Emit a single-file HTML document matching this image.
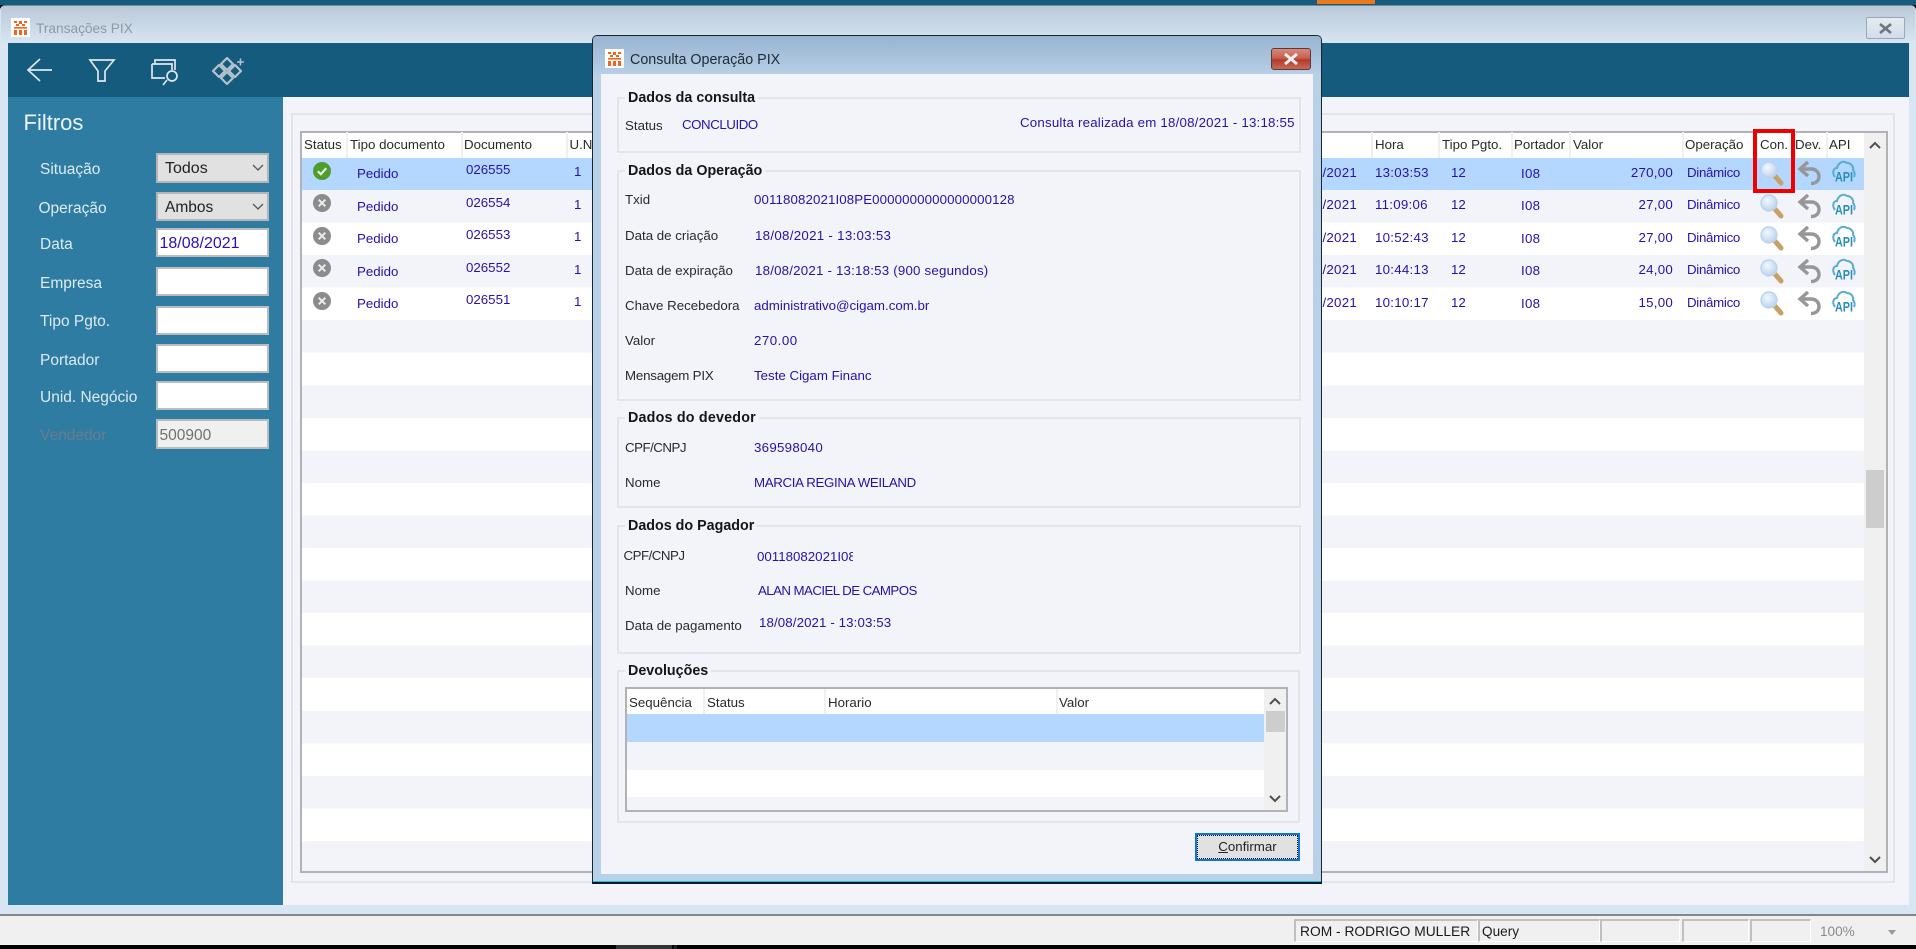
<!DOCTYPE html>
<html lang="pt">
<head>
<meta charset="utf-8">
<title>Transações PIX</title>
<style>
html,body{margin:0;padding:0;width:1916px;height:949px;overflow:hidden;background:#000}
body{position:relative;font-family:"Liberation Sans",sans-serif;font-size:13.3px;color:#222;filter:blur(.35px)}
.a{position:absolute;box-sizing:border-box}
.t{position:absolute;white-space:nowrap;line-height:16px;height:16px;font-size:13.3px}
.b{color:#2612a8}
.k{color:#2a2a2a}
.n{letter-spacing:.25px}
.u{letter-spacing:-.45px}
.d{letter-spacing:-.3px}
.s{font-size:15.5px;color:#dcebf3;line-height:20px;height:20px}
.in{position:absolute;box-sizing:border-box;left:156px;width:113px;background:#fff;border:2px solid #b9bcbf}
.sel{background:#e1e1e1;border:2px solid #b5b5b5}
.gb{position:absolute;box-sizing:border-box;border:2px solid #e3e5ea}
.lg{position:absolute;white-space:nowrap;font-weight:bold;font-size:14.3px;line-height:16px;color:#151515;background:#f2f4fa;padding:0 3px 0 3px}
.hd{position:absolute;width:2px;background:#f0f0f0}
.c{position:absolute;box-sizing:border-box;top:919px;height:23px;border-top:2px solid #c0c0c0;border-left:2px solid #c0c0c0;border-right:1px solid #fff;border-bottom:1px solid #fff}
svg{position:absolute;overflow:visible}
</style>
</head>
<body>
<svg width="0" height="0" style="left:0;top:0">
<defs>
<symbol id="logo" viewBox="0 0 19 19" overflow="visible">
<rect width="19" height="19" fill="#fff"/>
<g fill="#f0641e"><rect x="3" y="3" width="3" height="2"/><rect x="8" y="3" width="3" height="3"/><rect x="13" y="3" width="3" height="2"/><rect x="5" y="6" width="3" height="2"/><rect x="11" y="6" width="3" height="2"/><rect x="3" y="9" width="13" height="1.6"/><rect x="3" y="12" width="3" height="5"/><rect x="8" y="12" width="3" height="5"/><rect x="13" y="12" width="3" height="5"/></g>
</symbol>
<radialGradient id="lens" cx="40%" cy="35%" r="70%"><stop offset="0" stop-color="#f4f9ff"/><stop offset="1" stop-color="#b4d0ec"/></radialGradient>
<symbol id="mag" viewBox="0 0 24 26" overflow="visible">
<path d="M14 14 L21 22" stroke="#c99f66" stroke-width="5" stroke-linecap="round"/>
<circle cx="9" cy="9" r="8" fill="url(#lens)" stroke="#bcd4ea" stroke-width="1.4"/>
</symbol>
<symbol id="und" viewBox="0 0 24 26" overflow="visible">
<path d="M10 2 L2 9 L10 16 M2.5 9 H13 C18 9 21 12.5 21 16.5 C21 20.5 18 23.5 13 23.5" fill="none" stroke="#979797" stroke-width="3.4"/>
</symbol>
<symbol id="api" viewBox="0 0 24 24" overflow="visible">
<path d="M3 17 C0 13 1 8 5 8 C6 3 11 0 15 3 C19 3 22 7 21 10 C23 12 23 15 22 17" fill="none" stroke="#58acd0" stroke-width="2"/>
<text x="12" y="21.5" text-anchor="middle" font-family="Liberation Sans" font-weight="bold" font-size="14" fill="#2a8db8" textLength="18" lengthAdjust="spacingAndGlyphs">API</text>
</symbol>
<symbol id="xc" viewBox="0 0 18 18" overflow="visible">
<circle cx="9" cy="9" r="9" fill="#8c8c8c"/>
<path d="M5.7 5.7 L12.3 12.3 M12.3 5.7 L5.7 12.3" stroke="#ececec" stroke-width="2"/>
</symbol>
<symbol id="ok" viewBox="0 0 18 18" overflow="visible">
<circle cx="9" cy="9" r="9" fill="#4e9e2e"/>
<path d="M4.8 9.3 L7.9 12.2 L13.2 6.2" fill="none" stroke="#e8f5e0" stroke-width="2.2"/>
</symbol>
</defs>
</svg>

<!-- desktop strip -->
<div class="a" style="left:0;top:0;width:1916px;height:5px;background:#155b7d"></div>
<div class="a" style="left:1317px;top:0;width:58px;height:4px;background:#e87a1e"></div>

<!-- main window -->
<div class="a" style="left:0;top:5px;width:1916px;height:910px;background:#d8e5f2;border-top:1px solid #7c8a96;border-radius:5px 5px 0 0"></div>
<div class="a" style="left:1px;top:6px;width:1914px;height:37px;background:linear-gradient(#bac9d8,#d8e6f3);border-radius:4px 4px 0 0"></div>
<svg style="left:11px;top:18px" width="19" height="19"><use href="#logo" width="19" height="19"/></svg>
<div class="t" style="left:36px;top:21px;font-size:13.7px;color:#8d99a5">Transações PIX</div>
<div class="a" style="left:1866px;top:17px;width:39px;height:22px;background:linear-gradient(#e4ebf2,#d2ddE8);border:1px solid #9aa8b6;border-radius:2px"></div>
<svg style="left:1878px;top:23px" width="16" height="11"><path d="M2 1 L13 10 M13 1 L2 10" stroke="#6c7680" stroke-width="2.6" fill="none"/></svg>

<!-- toolbar -->
<div class="a" style="left:8px;top:43px;width:1901px;height:54px;background:#155b7d"></div>
<svg style="left:0;top:0" width="260" height="97" fill="none" stroke="#dfe7ec" stroke-width="1.7">
<path d="M52 70 H28 M40 59 L28 70 L40 81"/>
<path d="M90 60 H114 L105 71 V81 H98 V71 Z"/>
<path d="M155 64 V60 H175 V70 M152 64 H172 V70 M152 64 V78 H165"/>
<path d="M167 80 L163 85"/><circle cx="172" cy="76" r="5"/>
<g stroke="#b4c2cb" stroke-width="2.2" stroke-linejoin="round">
<path d="M227 58 L233 64 L227 70 L221 64 Z"/>
<path d="M219 65 L225 71 L219 77 L213 71 Z"/>
<path d="M235 65 L241 71 L235 77 L229 71 Z"/>
<path d="M227 72 L233 78 L227 84 L221 78 Z"/>
</g>
<path d="M237 62 H244 M240.5 58.5 V65.5" stroke="#b4c2cb" stroke-width="1.6"/>
</svg>

<!-- sidebar -->
<div class="a" style="left:8px;top:97px;width:275px;height:808px;background:#2f7ca3"></div>
<div class="t" style="left:23.5px;top:111px;font-size:22px;color:#eef5f9;line-height:24px;height:24px">Filtros</div>

<div class="t s" style="left:40px;top:159.5px">Situação</div>
<div class="in sel" style="top:153px;height:30px"></div>
<div class="t" style="left:165px;top:159px;font-size:16px;line-height:20px;height:20px;color:#222">Todos</div>
<svg style="left:252px;top:164px" width="12" height="8"><path d="M1 1 L6 6 L11 1" stroke="#555" stroke-width="1.3" fill="none"/></svg>

<div class="t s" style="left:38.5px;top:198.5px">Operação</div>
<div class="in sel" style="top:192px;height:29px"></div>
<div class="t" style="left:165px;top:198px;font-size:15.5px;line-height:20px;height:20px;color:#222">Ambos</div>
<svg style="left:252px;top:203px" width="12" height="8"><path d="M1 1 L6 6 L11 1" stroke="#555" stroke-width="1.3" fill="none"/></svg>

<div class="t s" style="left:40px;top:235px">Data</div>
<div class="in" style="top:228px;height:29px"></div>
<div class="t" style="left:159.5px;top:233.5px;font-size:16px;line-height:20px;height:20px;color:#2a10b8">18/08/2021</div>

<div class="t s" style="left:40px;top:274px">Empresa</div>
<div class="in" style="top:267px;height:29px"></div>

<div class="t s" style="left:40px;top:312px">Tipo Pgto.</div>
<div class="in" style="top:306px;height:29px"></div>

<div class="t s" style="left:40px;top:351px">Portador</div>
<div class="in" style="top:344px;height:29px"></div>

<div class="t s" style="left:40px;top:387.5px">Unid. Negócio</div>
<div class="in" style="top:381px;height:29px"></div>

<div class="t s" style="left:40px;top:426px;color:#677d8b">Vendedor</div>
<div class="in" style="top:419px;height:30px;background:#f0f0f0"></div>
<div class="t" style="left:159.5px;top:425.5px;font-size:15.5px;line-height:20px;height:20px;color:#707070">500900</div>

<!-- main panel -->
<div class="a" style="left:283px;top:97px;width:1626px;height:808px;background:#f2f4fa"></div>
<div class="a" style="left:291px;top:113px;width:1604px;height:770px;border:2px solid #e3e5ea"></div>

<!-- grid -->
<div class="a" style="left:299.5px;top:130.5px;width:1588px;height:742px;background:#fff;border:2px solid #b0b2b5"></div>
<div class="a" style="left:301.5px;top:190px;width:1562.5px;height:681px;background:repeating-linear-gradient(#f2f4fa 0,#f2f4fa 32.55px,#fff 32.55px,#fff 65.1px)"></div>
<div class="a" style="left:301.5px;top:158px;width:1562.5px;height:32px;background:#b3d7fe"></div>
<div class="a" style="left:1864px;top:132.5px;width:21.5px;height:738px;background:#f0f0f0"></div>
<div class="a" style="left:1866px;top:470px;width:18px;height:58px;background:#cdcdcd"></div>
<svg style="left:1869px;top:141px" width="12" height="8"><path d="M1 7 L6 2 L11 7" stroke="#505050" stroke-width="2" fill="none"/></svg>
<svg style="left:1869px;top:856px" width="12" height="8"><path d="M1 1 L6 6 L11 1" stroke="#505050" stroke-width="2" fill="none"/></svg>

<!-- header dividers -->
<div class="hd" style="left:346px;top:132px;height:26px"></div>
<div class="hd" style="left:461px;top:132px;height:26px"></div>
<div class="hd" style="left:566px;top:132px;height:26px"></div>
<div class="hd" style="left:1371px;top:132px;height:26px"></div>
<div class="hd" style="left:1438px;top:132px;height:26px"></div>
<div class="hd" style="left:1511px;top:132px;height:26px"></div>
<div class="hd" style="left:1569px;top:132px;height:26px"></div>
<div class="hd" style="left:1682px;top:132px;height:26px"></div>
<div class="hd" style="left:1794px;top:132px;height:26px"></div>
<div class="hd" style="left:1826px;top:132px;height:26px"></div>

<!-- headers -->
<div class="t k" style="left:304px;top:137px">Status</div>
<div class="t k" style="left:350px;top:137px">Tipo documento</div>
<div class="t k" style="left:464px;top:137px">Documento</div>
<div class="t k" style="left:569.5px;top:137px">U.N</div>
<div class="t k" style="left:1375px;top:137px">Hora</div>
<div class="t k" style="left:1442px;top:137px">Tipo Pgto.</div>
<div class="t k" style="left:1514px;top:137px">Portador</div>
<div class="t k" style="left:1573px;top:137px">Valor</div>
<div class="t k" style="left:1685px;top:137px">Operação</div>
<div class="t k" style="left:1760px;top:137px">Con.</div>
<div class="t k" style="left:1795px;top:137px">Dev.</div>
<div class="t k" style="left:1829px;top:137px">API</div>

<!-- row 1 -->
<svg style="left:312.5px;top:161.5px" width="18" height="18"><use href="#ok" width="18" height="18"/></svg>
<div class="t b" style="left:357px;top:166px">Pedido</div>
<div class="t b" style="left:466px;top:162px">026555</div>
<div class="t b" style="left:574px;top:164px">1</div>
<div class="t b n" style="left:1257px;top:164.5px;width:100px;text-align:right">/2021</div>
<div class="t b n" style="left:1375px;top:164.5px">13:03:53</div>
<div class="t b" style="left:1451px;top:164.5px">12</div>
<div class="t b n" style="left:1521px;top:165.5px">I08</div>
<div class="t b n" style="left:1573px;top:164.5px;width:100px;text-align:right">270,00</div>
<div class="t b d" style="left:1687px;top:164.5px">Dinâmico</div>
<svg style="left:1760px;top:161px" width="24" height="26"><use href="#mag" width="24" height="26"/></svg>
<svg style="left:1798px;top:160px" width="24" height="26"><use href="#und" width="24" height="26"/></svg>
<svg style="left:1832px;top:160px" width="24" height="24"><use href="#api" width="24" height="24"/></svg>

<!-- row 2 -->
<svg style="left:312.5px;top:194px" width="18" height="18"><use href="#xc" width="18" height="18"/></svg>
<div class="t b" style="left:357px;top:198.5px">Pedido</div>
<div class="t b" style="left:466px;top:194.5px">026554</div>
<div class="t b" style="left:574px;top:196.5px">1</div>
<div class="t b n" style="left:1257px;top:197px;width:100px;text-align:right">/2021</div>
<div class="t b n" style="left:1375px;top:197px">11:09:06</div>
<div class="t b" style="left:1451px;top:197px">12</div>
<div class="t b n" style="left:1521px;top:198px">I08</div>
<div class="t b n" style="left:1573px;top:197px;width:100px;text-align:right">27,00</div>
<div class="t b d" style="left:1687px;top:197px">Dinâmico</div>
<svg style="left:1760px;top:193.5px" width="24" height="26"><use href="#mag" width="24" height="26"/></svg>
<svg style="left:1798px;top:192.5px" width="24" height="26"><use href="#und" width="24" height="26"/></svg>
<svg style="left:1832px;top:192.5px" width="24" height="24"><use href="#api" width="24" height="24"/></svg>

<!-- row 3 -->
<svg style="left:312.5px;top:226.5px" width="18" height="18"><use href="#xc" width="18" height="18"/></svg>
<div class="t b" style="left:357px;top:231px">Pedido</div>
<div class="t b" style="left:466px;top:227px">026553</div>
<div class="t b" style="left:574px;top:229px">1</div>
<div class="t b n" style="left:1257px;top:229.5px;width:100px;text-align:right">/2021</div>
<div class="t b n" style="left:1375px;top:229.5px">10:52:43</div>
<div class="t b" style="left:1451px;top:229.5px">12</div>
<div class="t b n" style="left:1521px;top:230.5px">I08</div>
<div class="t b n" style="left:1573px;top:229.5px;width:100px;text-align:right">27,00</div>
<div class="t b d" style="left:1687px;top:229.5px">Dinâmico</div>
<svg style="left:1760px;top:226px" width="24" height="26"><use href="#mag" width="24" height="26"/></svg>
<svg style="left:1798px;top:225px" width="24" height="26"><use href="#und" width="24" height="26"/></svg>
<svg style="left:1832px;top:225px" width="24" height="24"><use href="#api" width="24" height="24"/></svg>

<!-- row 4 -->
<svg style="left:312.5px;top:259px" width="18" height="18"><use href="#xc" width="18" height="18"/></svg>
<div class="t b" style="left:357px;top:263.5px">Pedido</div>
<div class="t b" style="left:466px;top:259.5px">026552</div>
<div class="t b" style="left:574px;top:261.5px">1</div>
<div class="t b n" style="left:1257px;top:262px;width:100px;text-align:right">/2021</div>
<div class="t b n" style="left:1375px;top:262px">10:44:13</div>
<div class="t b" style="left:1451px;top:262px">12</div>
<div class="t b n" style="left:1521px;top:263px">I08</div>
<div class="t b n" style="left:1573px;top:262px;width:100px;text-align:right">24,00</div>
<div class="t b d" style="left:1687px;top:262px">Dinâmico</div>
<svg style="left:1760px;top:258.5px" width="24" height="26"><use href="#mag" width="24" height="26"/></svg>
<svg style="left:1798px;top:257.5px" width="24" height="26"><use href="#und" width="24" height="26"/></svg>
<svg style="left:1832px;top:257.5px" width="24" height="24"><use href="#api" width="24" height="24"/></svg>

<!-- row 5 -->
<svg style="left:312.5px;top:291.5px" width="18" height="18"><use href="#xc" width="18" height="18"/></svg>
<div class="t b" style="left:357px;top:296px">Pedido</div>
<div class="t b" style="left:466px;top:292px">026551</div>
<div class="t b" style="left:574px;top:294px">1</div>
<div class="t b n" style="left:1257px;top:294.5px;width:100px;text-align:right">/2021</div>
<div class="t b n" style="left:1375px;top:294.5px">10:10:17</div>
<div class="t b" style="left:1451px;top:294.5px">12</div>
<div class="t b n" style="left:1521px;top:295.5px">I08</div>
<div class="t b n" style="left:1573px;top:294.5px;width:100px;text-align:right">15,00</div>
<div class="t b d" style="left:1687px;top:294.5px">Dinâmico</div>
<svg style="left:1760px;top:291px" width="24" height="26"><use href="#mag" width="24" height="26"/></svg>
<svg style="left:1798px;top:290px" width="24" height="26"><use href="#und" width="24" height="26"/></svg>
<svg style="left:1832px;top:290px" width="24" height="24"><use href="#api" width="24" height="24"/></svg>

<!-- red highlight -->
<div class="a" style="left:1753px;top:129px;width:42px;height:64px;border:4px solid #ee0000"></div>

<!-- dialog -->
<div class="a" style="left:592px;top:35px;width:730px;height:849px;background:#b8d0e8;border:1px solid #1a2630;border-bottom:2px solid #0d1a20;border-radius:5px 5px 0 0"></div>
<div class="a" style="left:593px;top:36px;width:728px;height:38px;background:linear-gradient(#98b4d0,#b7cfe7);border-radius:4px 4px 0 0"></div>
<div class="a" style="left:593px;top:881px;width:728px;height:1px;background:#1cc0d8"></div>
<div class="a" style="left:601px;top:74px;width:712px;height:800px;background:#f2f4fa"></div>
<svg style="left:605px;top:49px" width="19" height="19"><use href="#logo" width="19" height="19"/></svg>
<div class="t" style="left:630px;top:52px;font-size:14.3px;color:#1e2a35">Consulta Operação PIX</div>
<div class="a" style="left:1271px;top:48px;width:40px;height:22px;background:linear-gradient(#d98a7c 0,#c8604e 45%,#b13c28 55%,#c86a58 100%);border:1px solid #5a3a3a;border-radius:3px"></div>
<svg style="left:1283px;top:53px" width="16" height="12"><path d="M2 1 L14 11 M14 1 L2 11" stroke="#eef0f2" stroke-width="3" fill="none"/></svg>

<!-- Dados da consulta -->
<div class="gb" style="left:617px;top:97px;width:684px;height:56px"></div>
<div class="lg" style="left:625px;top:90px">Dados da consulta</div>
<div class="t k" style="left:625px;top:118px">Status</div>
<div class="t b u" style="left:682px;top:117px">CONCLUIDO</div>
<div class="t b" style="left:1020px;top:115px;letter-spacing:.2px">Consulta realizada em 18/08/2021 - 13:18:55</div>

<!-- Dados da Operação -->
<div class="gb" style="left:617px;top:170px;width:684px;height:231px"></div>
<div class="lg" style="left:625px;top:163px">Dados da Operação</div>
<div class="t k" style="left:625px;top:192px">Txid</div>
<div class="t b" style="left:754px;top:192px;letter-spacing:.1px">00118082021I08PE0000000000000000128</div>
<div class="t k" style="left:625px;top:228px">Data de criação</div>
<div class="t b" style="left:755px;top:228px;letter-spacing:.29px">18/08/2021 - 13:03:53</div>
<div class="t k" style="left:625px;top:263px">Data de expiração</div>
<div class="t b" style="left:755px;top:263px;letter-spacing:.2px">18/08/2021 - 13:18:53 (900 segundos)</div>
<div class="t k" style="left:625px;top:298px">Chave Recebedora</div>
<div class="t b" style="left:754px;top:298px">administrativo@cigam.com.br</div>
<div class="t k" style="left:625px;top:333px">Valor</div>
<div class="t b" style="left:754px;top:333px;letter-spacing:.5px">270.00</div>
<div class="t k" style="left:625px;top:368px;letter-spacing:-.2px">Mensagem PIX</div>
<div class="t b" style="left:754px;top:368px">Teste Cigam Financ</div>

<!-- Dados do devedor -->
<div class="gb" style="left:617px;top:417px;width:684px;height:91px"></div>
<div class="lg" style="left:625px;top:410px;letter-spacing:.2px">Dados do devedor</div>
<div class="t k" style="left:625px;top:440px;letter-spacing:-.5px">CPF/CNPJ</div>
<div class="t b" style="left:754px;top:440px;letter-spacing:.27px">369598040</div>
<div class="t k" style="left:625px;top:475px">Nome</div>
<div class="t b" style="left:754px;top:475px;letter-spacing:-.35px">MARCIA REGINA WEILAND</div>

<!-- Dados do Pagador -->
<div class="gb" style="left:617px;top:525px;width:684px;height:129px"></div>
<div class="lg" style="left:625px;top:518px">Dados do Pagador</div>
<div class="t k" style="left:623.5px;top:548px;letter-spacing:-.5px">CPF/CNPJ</div>
<div class="t b" style="left:757px;top:549px;width:96px;overflow:hidden">00118082021I08PE</div>
<div class="t k" style="left:625px;top:583px">Nome</div>
<div class="t b" style="left:758px;top:583px;letter-spacing:-.58px">ALAN MACIEL DE CAMPOS</div>
<div class="t k" style="left:625px;top:618px">Data de pagamento</div>
<div class="t b" style="left:759px;top:615px;letter-spacing:.1px">18/08/2021 - 13:03:53</div>

<!-- Devoluções -->
<div class="gb" style="left:617px;top:670px;width:683px;height:153px"></div>
<div class="lg" style="left:625px;top:663px">Devoluções</div>
<div class="a" style="left:625px;top:687px;width:663px;height:125px;background:#fff;border:2px solid #b0b2b5"></div>
<div class="a" style="left:627px;top:714px;width:637px;height:28px;background:#b3d7fe"></div>
<div class="a" style="left:627px;top:742px;width:637px;height:27.5px;background:#f2f4fa"></div>
<div class="a" style="left:627px;top:797px;width:637px;height:13px;background:#f2f4fa"></div>
<div class="a" style="left:1264px;top:689px;width:22px;height:121px;background:#f0f0f0"></div>
<div class="a" style="left:1266px;top:711px;width:19px;height:21px;background:#cdcdcd"></div>
<svg style="left:1269px;top:697px" width="12" height="8"><path d="M1 7 L6 2 L11 7" stroke="#505050" stroke-width="2" fill="none"/></svg>
<svg style="left:1269px;top:795px" width="12" height="8"><path d="M1 1 L6 6 L11 1" stroke="#505050" stroke-width="2" fill="none"/></svg>
<div class="hd" style="left:703px;top:689px;height:25px"></div>
<div class="hd" style="left:824px;top:689px;height:25px"></div>
<div class="hd" style="left:1056px;top:689px;height:25px"></div>
<div class="t k" style="left:629px;top:695px">Sequência</div>
<div class="t k" style="left:707px;top:695px">Status</div>
<div class="t k" style="left:828px;top:695px">Horario</div>
<div class="t k" style="left:1059px;top:695px">Valor</div>

<!-- button -->
<div class="a" style="left:1195px;top:833px;width:105px;height:28px;background:#e1e1e1;border:2px solid #0a78d7"></div>
<div class="a" style="left:1197px;top:835px;width:101px;height:24px;border:1px dotted #111"></div>
<div class="t" style="left:1195px;top:839px;width:105px;text-align:center;color:#222"><span style="text-decoration:underline">C</span>onfirmar</div>

<!-- status bar -->
<div class="a" style="left:0;top:914px;width:1916px;height:31px;background:#f0f0f0;border-top:2px solid #868686"></div>
<div class="c" style="left:1294px;width:184px"></div>
<div class="c" style="left:1478px;width:122px"></div>
<div class="c" style="left:1600px;width:80px"></div>
<div class="c" style="left:1682px;width:67px"></div>
<div class="c" style="left:1750px;width:61px"></div>
<div class="t" style="left:1300px;top:924px;font-size:13.8px;color:#1a1a1a">ROM - RODRIGO MULLER</div>
<div class="t" style="left:1482px;top:924px;font-size:13.6px;color:#1a1a1a">Query</div>
<div class="t" style="left:1820px;top:924px;font-size:13.6px;color:#8a8a8a">100%</div>
<svg style="left:1888px;top:930px" width="8" height="5"><path d="M0 0 H8 L4 5 Z" fill="#9a9a9a"/></svg>

<!-- taskbar strip -->
<div class="a" style="left:0;top:945px;width:1916px;height:4px;background:#000"></div>
<div class="a" style="left:616px;top:945px;width:56px;height:4px;background:#333"></div>
<div class="a" style="left:674px;top:945px;width:3px;height:4px;background:#222"></div>
</body>
</html>
